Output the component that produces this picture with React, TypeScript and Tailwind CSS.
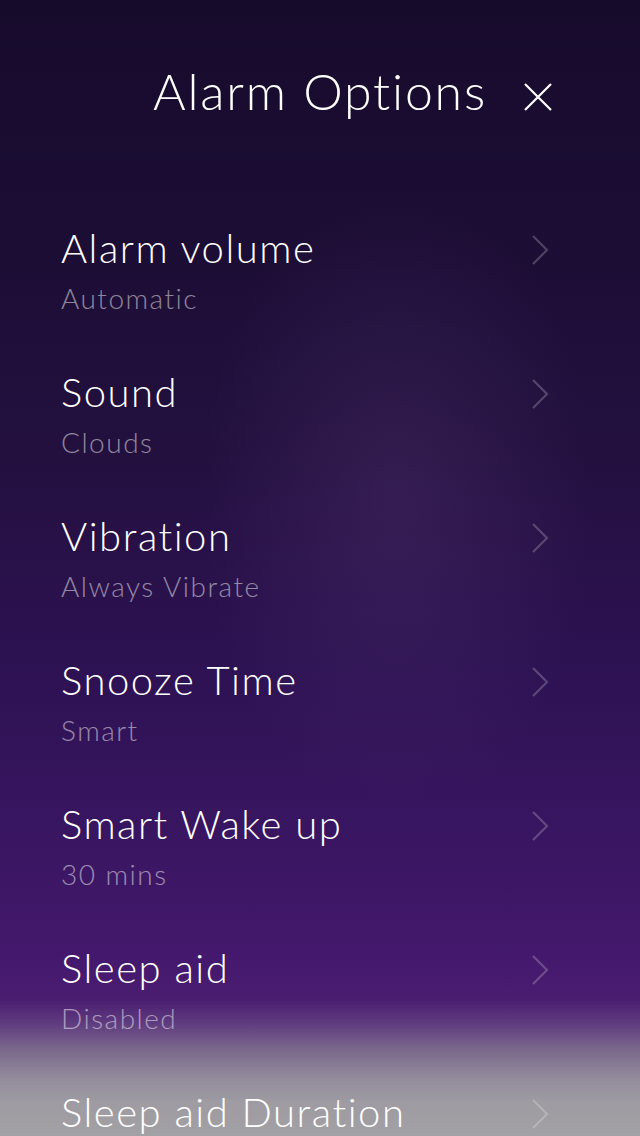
import React from "react";

const items = [
  { title: "Alarm volume", sub: "Automatic" },
  { title: "Sound", sub: "Clouds" },
  { title: "Vibration", sub: "Always Vibrate" },
  { title: "Snooze Time", sub: "Smart" },
  { title: "Smart Wake up", sub: "30 mins" },
  { title: "Sleep aid", sub: "Disabled" },
  { title: "Sleep aid Duration", sub: "" },
];

function Chevron() {
  return (
    <svg width="20" height="32" viewBox="0 0 20 32" fill="none" className="shrink-0">
      <path d="M3 2 L17 16 L3 30" stroke="rgba(255,255,255,0.22)" strokeWidth="2.2" />
    </svg>
  );
}

export default function App() {
  return (
    <div
      className="relative w-[640px] h-[1136px] overflow-hidden text-white bg-[radial-gradient(ellipse_at_62%_44%,rgba(90,60,120,0.3),transparent_35%),linear-gradient(180deg,#170b2c_0%,#1b0d34_20%,#23103f_40%,#2e1254_60%,#3d1766_78%,#45196e_85%,#4a1d70_88%,#5e3a7e_90%,#7c6a8c_92.5%,#938c9c_95%,#9e9ba2_97%,#a2a1a4_100%)]"
      style={{ fontFamily: "Lato, 'Noto Sans', sans-serif" }}
    >
      <div className="grid grid-cols-[1fr_auto_1fr] items-start pt-[61px]">
        <div />
        <div className="text-[50px] leading-[60px] font-light tracking-[1.8px]">Alarm Options</div>
        <div className="pl-[36px] pt-[21px] flex">
          <svg width="30" height="30" viewBox="0 0 30 30" fill="none">
            <path d="M2 2 L28 28 M28 2 L2 28" stroke="white" strokeWidth="2.2" />
          </svg>
        </div>
      </div>
      <div className="mt-[103px] flex flex-col">
        {items.map((it) => (
          <div key={it.title} className="h-[144px] pl-[61px] pr-[90px] flex justify-between items-start">
            <div className="flex flex-col">
              <div className="text-[40px] leading-[48px] font-light tracking-[1.5px]">{it.title}</div>
              {it.sub && (
                <div className="mt-[9px] text-[28px] leading-[34px] font-light tracking-[1.5px] text-white/50">{it.sub}</div>
              )}
            </div>
            <div className="pt-[10px]">
              <Chevron />
            </div>
          </div>
        ))}
      </div>
    </div>
  );
}
